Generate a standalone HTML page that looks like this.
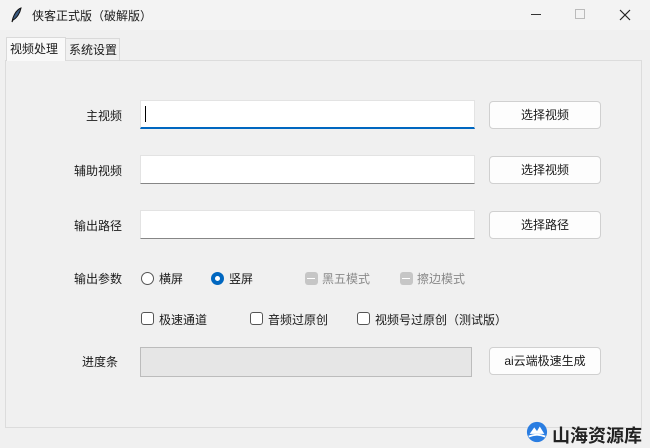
<!DOCTYPE html>
<html><head><meta charset="utf-8"><style>
*{margin:0;padding:0;box-sizing:border-box}
body{width:650px;height:447px;background:#f0f0f0;font-family:"Liberation Sans","Noto Sans CJK SC",sans-serif;font-size:12px;color:#1a1a1a;position:relative;overflow:hidden}
.a{position:absolute;white-space:nowrap}
.title{left:0;top:0;width:650px;height:30px;background:#f3f3f3}
.panel{left:5px;top:60px;width:637px;height:368px;border:1px solid #dcdcdc;background:#f0f0f0}
.tab{top:38px;height:23px;border:1px solid #d9d9d9;border-bottom:none;line-height:22px;padding:0 3px;font-size:12px}
.lbl{font-size:12px;text-align:right;width:60px}
.ent{left:140px;width:335px;height:29px;background:#fff;border:1px solid #e3e3e3;border-bottom:1px solid #868686}
.btn{left:489px;width:112px;height:28px;background:#fdfdfd;border:1px solid #d0d0d0;border-radius:4px;text-align:center;line-height:26px}
.rad{width:13px;height:13px;border-radius:50%;border:1px solid #555;background:#fff}
.chk{width:13px;height:13px;border-radius:3px;border:1px solid #555;background:#fff}
.dis{width:13px;height:13px;border-radius:3px;background:#c6c6c6}
</style></head><body>
<div class="a title"></div>
<svg class="a" style="left:10px;top:7px" width="12" height="16" viewBox="0 0 12 16"><path d="M2 15 C3 9 6 3 11 1 C10 6 7 11 3 13 Z" fill="#3a5a80" stroke="#111" stroke-width="1"/></svg>
<div class="a" style="left:32px;top:7px;font-size:12px">侠客正式版（破解版）</div>
<div class="a" style="left:531px;top:14px;width:10px;height:1px;background:#333"></div>
<div class="a" style="left:575px;top:9px;width:10px;height:10px;border:1px solid #bbb"></div>
<svg class="a" style="left:619px;top:9px" width="12" height="12" viewBox="0 0 12 12"><path d="M1 1 L11 11 M11 1 L1 11" stroke="#222" stroke-width="1.2"/></svg>
<div class="a panel"></div>
<div class="a tab" style="left:6px;top:37px;height:24px;background:#f9f9f9;width:60px">视频处理</div>
<div class="a tab" style="left:65px;width:55px">系统设置</div>

<div class="a lbl" style="left:62px;top:107px">主视频</div>
<div class="a ent" style="top:100px;border-bottom:2px solid #0067c0"></div>
<div class="a" style="left:145px;top:106px;width:1px;height:16px;background:#000"></div>
<div class="a btn" style="top:101px">选择视频</div>

<div class="a lbl" style="left:62px;top:162px">辅助视频</div>
<div class="a ent" style="top:155px"></div>
<div class="a btn" style="top:156px">选择视频</div>

<div class="a lbl" style="left:62px;top:217px">输出路径</div>
<div class="a ent" style="top:210px"></div>
<div class="a btn" style="top:211px">选择路径</div>

<div class="a lbl" style="left:62px;top:270px">输出参数</div>
<div class="a rad" style="left:141px;top:272px"></div>
<div class="a" style="left:159px;top:270px">横屏</div>
<div class="a rad" style="left:211px;top:272px;border:4px solid #0067c0"></div>
<div class="a" style="left:229px;top:270px">竖屏</div>
<div class="a dis" style="left:305px;top:272px"></div>
<div class="a" style="left:307px;top:278px;width:8px;height:1px;background:#fff"></div>
<div class="a" style="left:322px;top:270px;color:#8a8a8a">黑五模式</div>
<div class="a dis" style="left:400px;top:272px"></div>
<div class="a" style="left:402px;top:278px;width:8px;height:1px;background:#fff"></div>
<div class="a" style="left:417px;top:270px;color:#8a8a8a">擦边模式</div>

<div class="a chk" style="left:141px;top:312px"></div>
<div class="a" style="left:159px;top:311px">极速通道</div>
<div class="a chk" style="left:250px;top:312px"></div>
<div class="a" style="left:268px;top:311px">音频过原创</div>
<div class="a chk" style="left:357px;top:312px"></div>
<div class="a" style="left:375px;top:311px">视频号过原创（测试版）</div>

<div class="a lbl" style="left:58px;top:353px">进度条</div>
<div class="a" style="left:140px;top:347px;width:332px;height:30px;background:#e6e6e6;border:1px solid #bcbcbc"></div>
<div class="a btn" style="top:347px">ai云端极速生成</div>

<svg class="a" style="left:525px;top:421px" width="24" height="22" viewBox="0 0 26 24"><circle cx="13" cy="12" r="11" fill="#2a7de1"/><path d="M5 14 L10 7 L13 11 L16 6 L21 14 Z" fill="#fff"/><path d="M4 17 Q13 13 22 17" stroke="#fff" stroke-width="2" fill="none"/></svg>
<div class="a" style="left:552px;top:422px;font-size:18px;font-weight:bold;color:#222">山海资源库</div>
</body></html>
